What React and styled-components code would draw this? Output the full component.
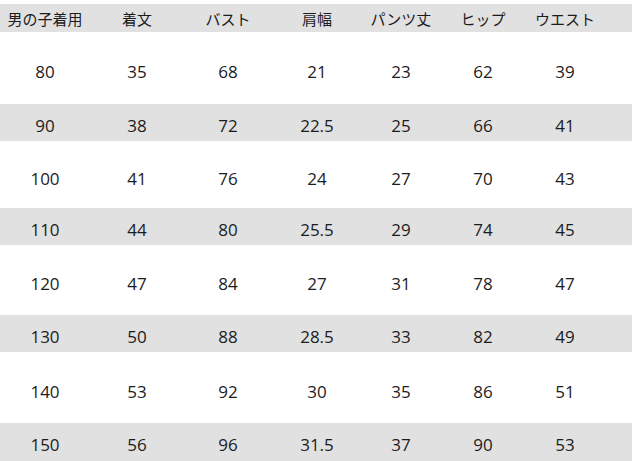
import React from 'react'
import styled, { createGlobalStyle } from 'styled-components'

const GlobalStyle = createGlobalStyle`
  html, body {
    margin: 0;
    padding: 0;
    background: #fff;
  }
  body {
    font-family: 'Open Sans', 'Noto Sans CJK JP', sans-serif;
    color: #1c1c1c;
  }
`

const Table = styled.div`
  width: 632px;
  height: 461px;
  padding-top: 4px;
  box-sizing: border-box;
  overflow: hidden;
`

const Row = styled.div`
  display: grid;
  grid-template-columns: 90px 94px 88px 90px 78px 86px 78px;
  align-items: center;
  height: ${p => p.h}px;
  background: ${p => (p.shaded ? '#e1e1e1' : '#fff')};
`

const HeadCell = styled.div`
  text-align: center;
  font-family: 'Noto Sans CJK JP', sans-serif;
  font-size: 15px;
  line-height: 1;
`

const Cell = styled.div`
  text-align: center;
  font-size: 17px;
  line-height: 1;
  padding-top: ${p => (p.shaded ? 5 : 7)}px;
`

const headers = ['男の子着用', '着文', 'バスト', '肩幅', 'パンツ丈', 'ヒップ', 'ウエスト']

const rows = [
  { h: 72, values: ['80', '35', '68', '21', '23', '62', '39'] },
  { h: 37, values: ['90', '38', '72', '22.5', '25', '66', '41'] },
  { h: 67, values: ['100', '41', '76', '24', '27', '70', '43'] },
  { h: 37, values: ['110', '44', '80', '25.5', '29', '74', '45'] },
  { h: 70, values: ['120', '47', '84', '27', '31', '78', '47'] },
  { h: 37, values: ['130', '50', '88', '28.5', '33', '82', '49'] },
  { h: 71, values: ['140', '53', '92', '30', '35', '86', '51'] },
  { h: 38, values: ['150', '56', '96', '31.5', '37', '90', '53'] },
]

const App = () => (
  <>
    <GlobalStyle />
    <Table>
      <Row h={28} shaded>
        {headers.map(h => (
          <HeadCell key={h}>{h}</HeadCell>
        ))}
      </Row>
      {rows.map((row, i) => {
        const shaded = i % 2 === 1
        return (
          <Row key={row.values[0]} h={row.h} shaded={shaded}>
            {row.values.map((v, j) => (
              <Cell key={j} shaded={shaded}>
                {v}
              </Cell>
            ))}
          </Row>
        )
      })}
    </Table>
  </>
)

export default App
